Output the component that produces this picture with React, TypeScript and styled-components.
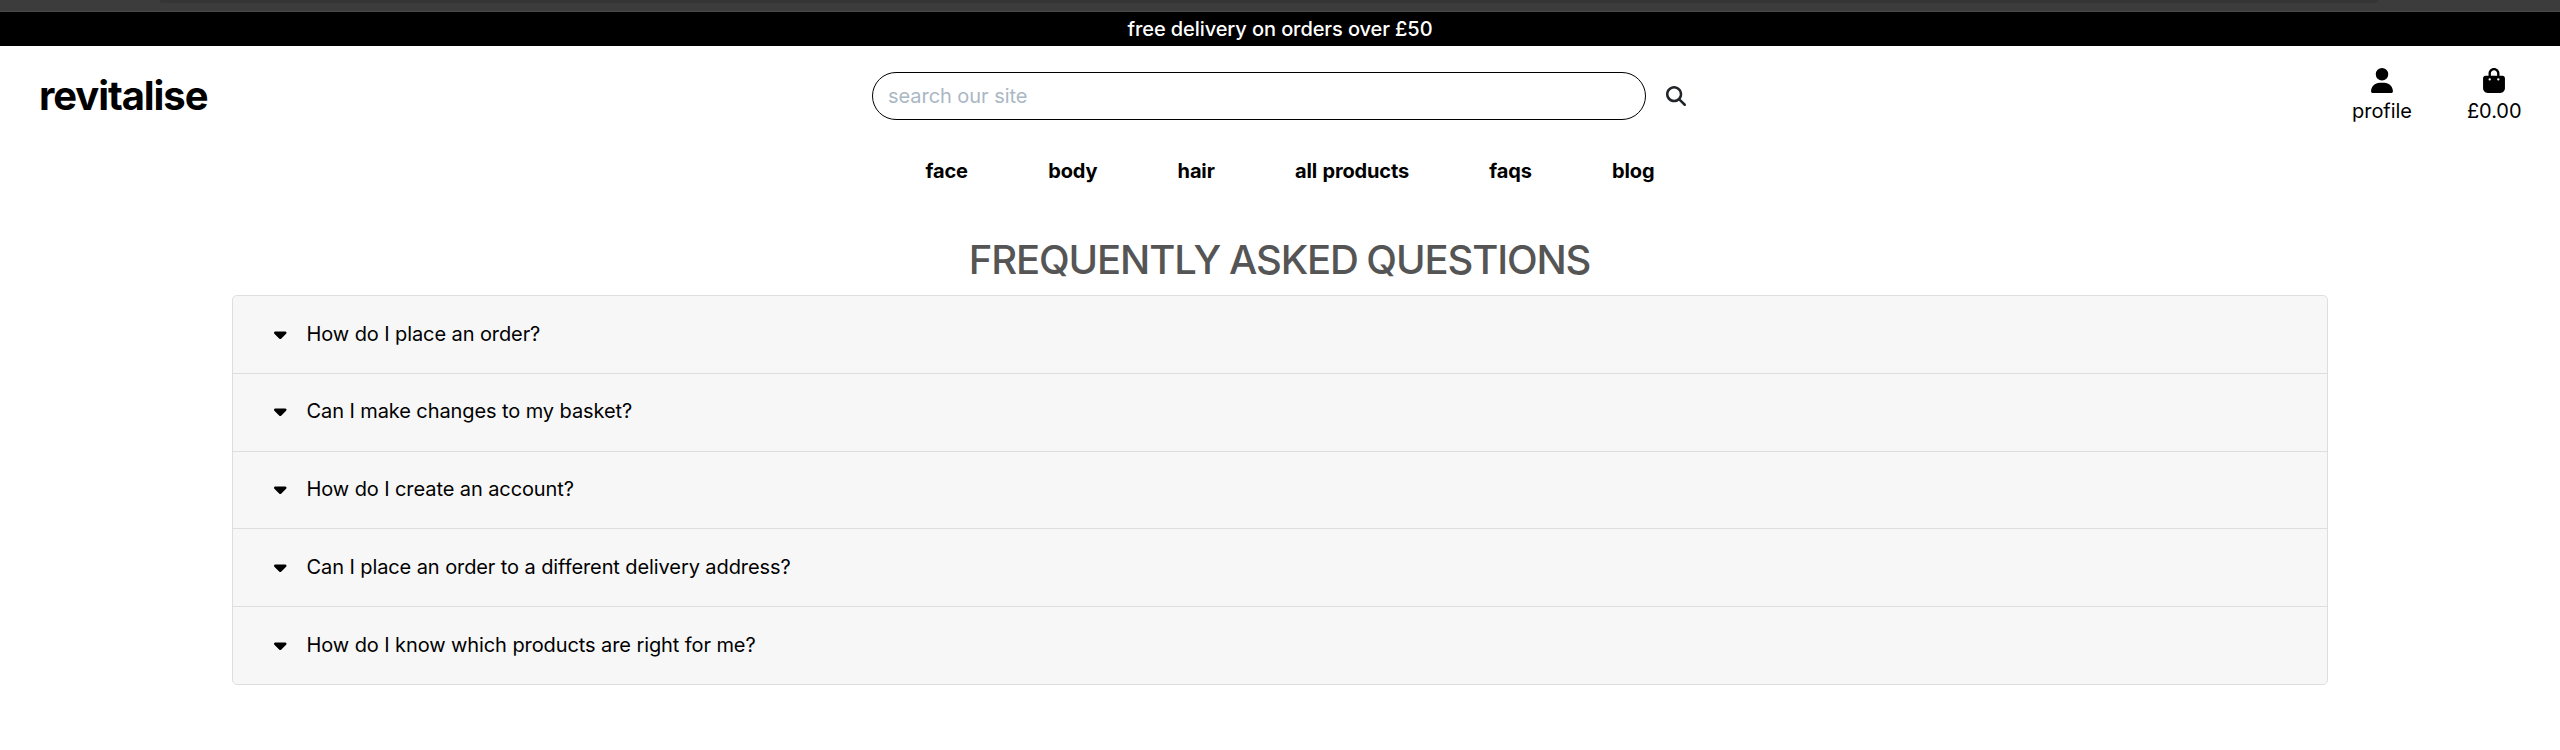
import React from 'react';
import styled, { createGlobalStyle } from 'styled-components';
import { FaBagShopping, FaCaretDown, FaMagnifyingGlass, FaUser } from 'react-icons/fa6';

const GlobalStyle = createGlobalStyle`
  *, *::before, *::after { box-sizing: border-box; }
  body {
    margin: 0;
    background: #fff;
    color: #000;
    font-family: Inter, 'Liberation Sans', sans-serif;
    font-size: 20px;
    line-height: 30px;
  }
  a { color: inherit; text-decoration: none; }
`;

const WindowEdge = styled.div`
  height: 12px;
  padding: 0 182px 0 160px;
  background: #3c3c3c;
  border-bottom: 1px solid #4a4a4a;
`;

const AddressBar = styled.div`
  height: 3px;
  background: #353535;
  border-radius: 0 0 6px 6px;
`;

const Banner = styled.div`
  display: flex;
  align-items: center;
  justify-content: center;
  height: 34px;
  background: #000;
  color: #fff;
  font-weight: 500;
  letter-spacing: -0.09px;
`;

const Header = styled.header`
  display: grid;
  grid-template-columns: 833px 854px 1fr;
  height: 100px;
  padding: 0 38.5px 0 39px;
`;

const Logo = styled.a`
  align-self: center;
  font-size: 40px;
  font-weight: 700;
  line-height: 48px;
  letter-spacing: -1.08px;
`;

const Search = styled.form`
  display: flex;
  align-items: center;
  gap: 20px;
`;

const SearchInput = styled.input`
  width: 774px;
  height: 48px;
  padding: 0 15px;
  border: 1px solid #000;
  border-radius: 24px;
  background: #fff;
  font: inherit;
  letter-spacing: -0.05px;
  &::placeholder { color: #aab7c4; opacity: 1; }
`;

const SearchButton = styled.button`
  display: flex;
  padding: 0 0 1px;
  border: 0;
  background: none;
  color: #212529;
  font-size: 20px;
`;

const Actions = styled.div`
  display: flex;
  justify-content: flex-end;
  align-items: flex-start;
  gap: 55px;
  padding-top: 22px;
  letter-spacing: -0.05px;
`;

const Action = styled.a`
  display: flex;
  flex-direction: column;
  align-items: center;
  gap: 3px;
  svg { width: 22px; height: 25px; }
`;

const Nav = styled.nav`
  display: flex;
  justify-content: center;
  gap: 80.3px;
  padding: 10px 0 10px 20px;
  font-weight: 700;
  letter-spacing: -0.15px;
  word-spacing: 1px;
`;

const Title = styled.h1`
  margin: 0;
  padding: 40px 1px 11px 0;
  color: #555;
  font-size: 40px;
  font-weight: 500;
  line-height: 48px;
  letter-spacing: -1.12px;
  word-spacing: -1px;
  text-align: center;
`;

const Accordion = styled.section`
  width: 2096px;
  margin: 0 auto;
  border: 1px solid #dedede;
  border-radius: 5px;
  background: #f7f7f7;
`;

const Question = styled.div`
  display: flex;
  align-items: center;
  gap: 20px;
  height: 76.8px;
  padding: 0 41px;
  letter-spacing: -0.09px;
  & + & {
    height: 77.8px;
    padding-bottom: 1.6px;
    border-top: 1px solid #dedede;
  }
  svg { width: 12.5px; height: 20px; }
`;

const links = ['face', 'body', 'hair', 'all products', 'faqs', 'blog'];

const questions = [
  'How do I place an order?',
  'Can I make changes to my basket?',
  'How do I create an account?',
  'Can I place an order to a different delivery address?',
  'How do I know which products are right for me?',
];

export default function App() {
  return (
    <>
      <GlobalStyle />
      <WindowEdge><AddressBar /></WindowEdge>
      <Banner>free delivery on orders over £50</Banner>
      <Header>
        <Logo href="#">revitalise</Logo>
        <Search>
          <SearchInput placeholder="search our site" />
          <SearchButton type="button" aria-label="search"><FaMagnifyingGlass /></SearchButton>
        </Search>
        <Actions>
          <Action href="#"><FaUser /><span>profile</span></Action>
          <Action href="#"><FaBagShopping /><span>£0.00</span></Action>
        </Actions>
      </Header>
      <Nav>{links.map((l) => <a key={l} href="#">{l}</a>)}</Nav>
      <main>
        <Title>FREQUENTLY ASKED QUESTIONS</Title>
        <Accordion>
          {questions.map((q) => (
            <Question key={q}><FaCaretDown /><span>{q}</span></Question>
          ))}
        </Accordion>
      </main>
    </>
  );
}
